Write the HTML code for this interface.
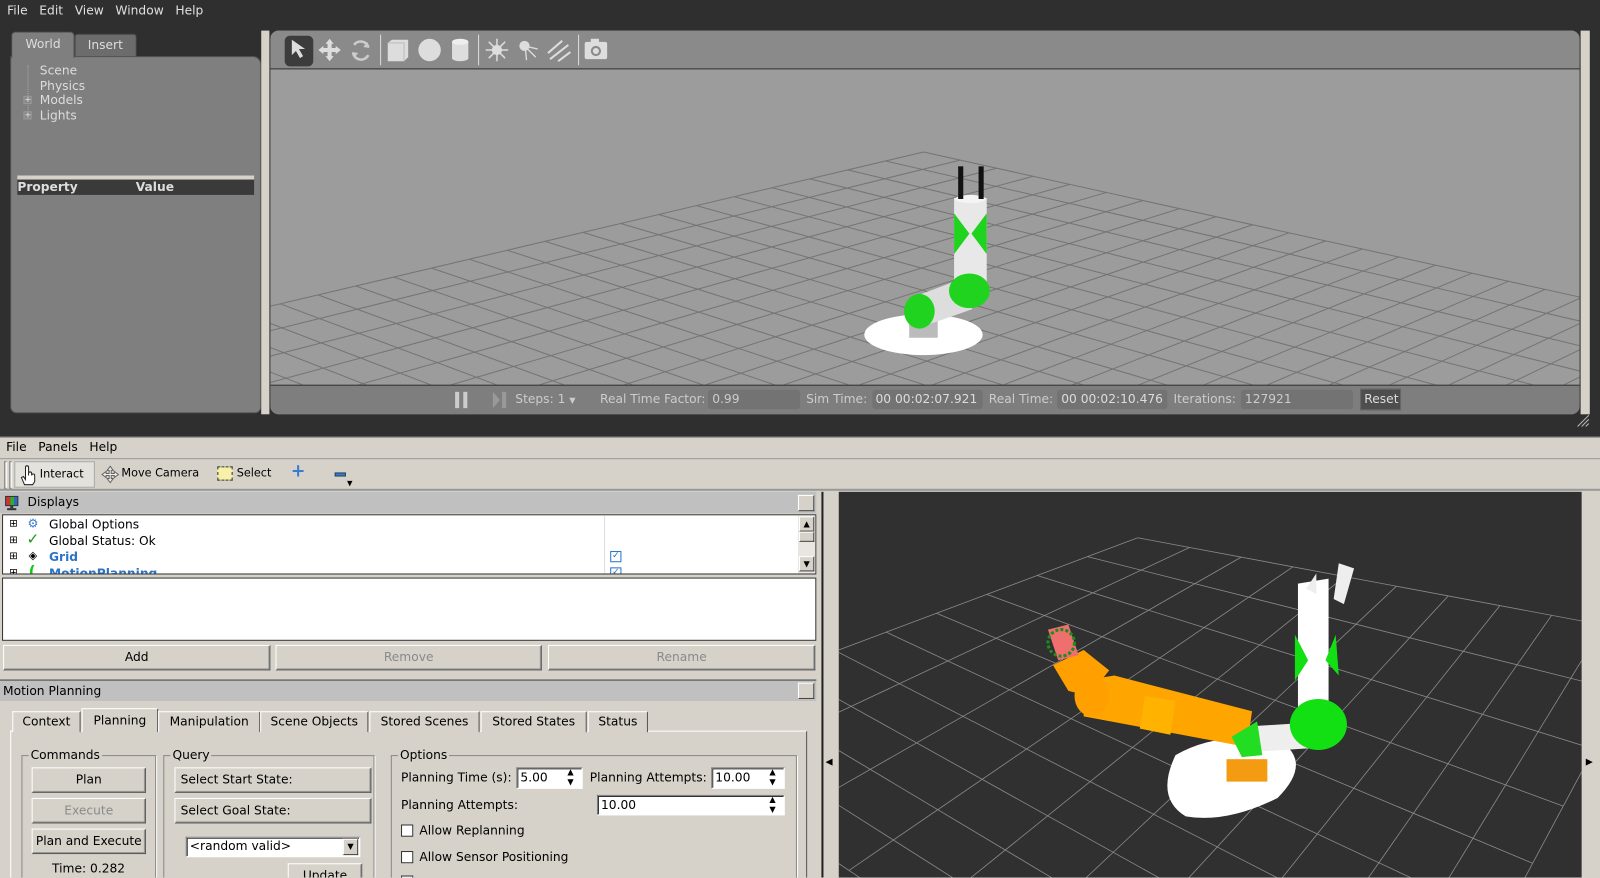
<!DOCTYPE html>
<html><head><meta charset="utf-8">
<style>
*{box-sizing:border-box;margin:0;padding:0}
html,body{width:1600px;height:878px;overflow:hidden;background:#d6d2ca;font-family:"DejaVu Sans","Liberation Sans",sans-serif;font-size:12px}
#root{position:absolute;left:0;top:0;width:1568px;height:860px;overflow:hidden;transform:scale(1.020408);transform-origin:0 0;background:#d6d2ca}
.a{position:absolute}
.t{position:absolute;white-space:nowrap;line-height:14px}
.btn{position:absolute;background:#d6d2ca;border:1px solid;border-color:#fff #555 #555 #fff;box-shadow:inset -1px -1px 0 #999;text-align:center;line-height:22px;color:#000}
.dis{color:#8a8a8a}
.sb{position:absolute;background:#fff;border:1px solid;border-color:#777 #fff #fff #777;box-shadow:inset 1px 1px 0 #333;padding-left:3px;line-height:18px}
.grp{position:absolute;border:1px solid #888;box-shadow:1px 1px 0 #fff}
.grp span{position:absolute;top:-8px;left:6px;background:#d6d2ca;padding:0 2px;line-height:14px}
.tab{position:absolute;top:697px;height:21px;border:1px solid;border-color:#fff #555 #d6d2ca #fff;line-height:19px;text-align:center;background:#d6d2ca}
.cb{position:absolute;width:12px;height:12px;background:#fff;border:1px solid #333}
</style></head><body><div id="root">

<div class="a" style="left:0;top:0;width:1568px;height:428px;background:#2f2f2f"></div>
<div class="t" style="left:7px;top:3px;color:#e0e0e0">File&nbsp;&nbsp;&nbsp;Edit&nbsp;&nbsp;&nbsp;View&nbsp;&nbsp;&nbsp;Window&nbsp;&nbsp;&nbsp;Help</div>

<div class="a" style="left:73px;top:33px;width:61px;height:23px;background:#6c6c6c;border:1px solid #444;border-radius:3px 3px 0 0"></div>
<div class="t" style="left:86px;top:37px;color:#ddd">Insert</div>
<div class="a" style="left:10px;top:55px;width:246px;height:350px;background:#7f7f7f;border:1px solid #555;border-radius:0 8px 6px 6px"></div>
<div class="a" style="left:11px;top:31px;width:62px;height:26px;background:#7f7f7f;border:1px solid #555;border-bottom:none;border-radius:4px 4px 0 0"></div>
<div class="t" style="left:25px;top:36px;color:#ddd">World</div>
<div class="a" style="left:27px;top:64px;width:1px;height:50px;border-left:1px dotted #aaa"></div>
<div class="t" style="left:39px;top:62px;color:#ddd">Scene</div>
<div class="t" style="left:39px;top:77px;color:#ddd">Physics</div>
<div class="t" style="left:39px;top:91px;color:#ddd">Models</div>
<div class="t" style="left:39px;top:106px;color:#ddd">Lights</div>
<div class="a" style="left:23px;top:94px;width:8px;height:8px;border:1px solid #999;background:#888;font-size:8px;line-height:6px;color:#eee;text-align:center">+</div>
<div class="a" style="left:23px;top:109px;width:8px;height:8px;border:1px solid #999;background:#888;font-size:8px;line-height:6px;color:#eee;text-align:center">+</div>
<div class="a" style="left:17px;top:172px;width:232px;height:4px;background:#d6d2ca"></div>
<div class="a" style="left:17px;top:176px;width:232px;height:15px;background:#3a3a3a"></div>
<div class="t" style="left:17px;top:176px;color:#ddd;font-weight:bold">Property</div>
<div class="t" style="left:133px;top:176px;color:#ddd;font-weight:bold">Value</div>

<div class="a" style="left:256px;top:30px;width:8px;height:376px;background:#d6d2ca"></div>
<div class="a" style="left:1549px;top:30px;width:9px;height:376px;background:#d6d2ca"></div>

<div class="a" style="left:265px;top:30px;width:1283px;height:376px;background:#9c9c9c;border-radius:8px;overflow:hidden">
 <div class="a" style="left:0;top:0;width:1283px;height:38px;background:#8a8a8a;border-bottom:1px solid #333"></div>
 <svg id="gz" class="a" style="left:0;top:39px" width="1283" height="308"></svg>
 <div class="a" style="left:0;top:347px;width:1283px;height:29px;background:#7e7e7e;border-top:1px solid #333"></div>
</div>
<div class="a" style="left:279px;top:35px;width:28px;height:30px;background:#3c3c3c;border-radius:5px"></div>
<svg class="a" style="left:279px;top:30px" width="330" height="38">
 <path d="M7 9 L7 24 L11 20 L15 27 L18 25 L14 18 L20 18 Z" fill="#ddd"/>
 <g fill="#ddd"><path d="M44 8 L48 13 L46 13 L46 17 L50 17 L50 15 L55 19 L50 23 L50 21 L46 21 L46 25 L48 25 L44 30 L40 25 L42 25 L42 21 L38 21 L38 23 L33 19 L38 15 L38 17 L42 17 L42 13 L40 13 Z"/></g>
 <path d="M68 14 A8 8 0 0 1 82 16 M82 24 A8 8 0 0 1 67 22" stroke="#ccc" stroke-width="2.5" fill="none"/>
 <path d="M81 11 L83 17 L77 16Z M68 27 L66 21 L72 22Z" fill="#ccc"/>
 <line x1="94" y1="4" x2="94" y2="34" stroke="#ddd"/>
 <path d="M101 12 L105 9 L121 9 L121 26 L117 30 L101 30 Z" fill="#ddd"/><path d="M101 12 L117 12 L117 30" stroke="#bbb" fill="none"/>
 <circle cx="142" cy="19" r="11" fill="#ddd"/>
 <path d="M164 11 L164 27 A8 3 0 0 0 180 27 L180 11 Z" fill="#ddd"/><ellipse cx="172" cy="11" rx="8" ry="3" fill="#eee"/>
 <line x1="190" y1="4" x2="190" y2="34" stroke="#ddd"/>
 <circle cx="208" cy="19" r="5" fill="#ddd"/><g stroke="#ddd" stroke-width="1.5"><line x1="208" y1="8" x2="208" y2="30"/><line x1="197" y1="19" x2="219" y2="19"/><line x1="200" y1="11" x2="216" y2="27"/><line x1="216" y1="11" x2="200" y2="27"/></g>
 <circle cx="235" cy="15" r="5" fill="#ddd"/><g stroke="#ddd" stroke-width="1.3"><line x1="238" y1="18" x2="246" y2="26"/><line x1="239" y1="16" x2="248" y2="18"/><line x1="236" y1="19" x2="237" y2="29"/></g>
 <g stroke="#ddd" stroke-width="2"><line x1="258" y1="22" x2="272" y2="10"/><line x1="260" y1="28" x2="278" y2="14"/><line x1="268" y1="30" x2="280" y2="21"/></g>
 <line x1="288" y1="4" x2="288" y2="34" stroke="#ddd"/>
 <rect x="294" y="11" width="22" height="17" rx="2" fill="#ddd"/><rect x="300" y="8" width="8" height="4" fill="#ddd"/><circle cx="305" cy="20" r="5" fill="#8a8a8a"/><circle cx="305" cy="20" r="3" fill="#ddd"/>
</svg>
<div class="a" style="left:446px;top:384px;width:4px;height:16px;background:#ccc"></div>
<div class="a" style="left:454px;top:384px;width:4px;height:16px;background:#ccc"></div>
<svg class="a" style="left:482px;top:383px" width="16" height="18"><path d="M1 1 L8 9 L1 17Z" fill="#999"/><rect x="10" y="1" width="4" height="16" fill="#999"/></svg>
<div class="t" style="left:505px;top:384px;color:#ccc">Steps: 1 <span style="font-size:8px">▼</span></div>
<div class="t" style="left:588px;top:384px;color:#ccc">Real Time Factor:</div>
<div class="a" style="left:694px;top:382px;width:90px;height:19px;background:#737373;border-radius:3px"></div>
<div class="t" style="left:698px;top:384px;color:#ccc">0.99</div>
<div class="t" style="left:790px;top:384px;color:#ccc">Sim Time:</div>
<div class="a" style="left:855px;top:382px;width:108px;height:19px;background:#737373;border-radius:3px"></div>
<div class="t" style="left:858px;top:384px;color:#ddd">00 00:02:07.921</div>
<div class="t" style="left:969px;top:384px;color:#ccc">Real Time:</div>
<div class="a" style="left:1036px;top:382px;width:108px;height:19px;background:#737373;border-radius:3px"></div>
<div class="t" style="left:1040px;top:384px;color:#ddd">00 00:02:10.476</div>
<div class="t" style="left:1150px;top:384px;color:#ccc">Iterations:</div>
<div class="a" style="left:1216px;top:382px;width:110px;height:19px;background:#737373;border-radius:3px"></div>
<div class="t" style="left:1220px;top:384px;color:#ccc">127921</div>
<div class="a" style="left:1333px;top:381px;width:40px;height:21px;background:#4e4e4e;border:1px solid #666"></div>
<div class="t" style="left:1337px;top:384px;color:#ddd">Reset</div>
<svg class="a" style="left:1544px;top:405px" width="14" height="14"><g stroke="#bbb"><line x1="2" y1="13" x2="13" y2="2"/><line x1="6" y1="13" x2="13" y2="6"/><line x1="10" y1="13" x2="13" y2="10"/></g></svg>

<div class="a" style="left:0;top:428px;width:1568px;height:1px;background:#888"></div>
<div class="t" style="left:6px;top:431px">File&nbsp;&nbsp;&nbsp;Panels&nbsp;&nbsp;&nbsp;Help</div>
<div class="a" style="left:0;top:449px;width:1568px;height:1px;background:#999"></div>
<div class="a" style="left:4px;top:452px;width:3px;height:27px;border:1px solid #888;border-right-color:#fff"></div>
<div class="a" style="left:9px;top:452px;width:3px;height:27px;border:1px solid #888;border-right-color:#fff"></div>
<div class="a" style="left:14px;top:452px;width:79px;height:26px;background:#e4e2dc;border:1px solid #aaa"></div>
<svg class="a" style="left:18px;top:455px" width="20" height="22"><path d="M6 20 L3 13 L5 12 L7 15 L7 3 A1.5 1.5 0 0 1 10 3 L10 11 L10 9 A1.5 1.5 0 0 1 13 9 L13 11 A1.5 1.5 0 0 1 16 11 L16 17 L14 20 Z" fill="#fff" stroke="#222"/></svg>
<div class="t" style="left:39px;top:458px;font-size:11px">Interact</div>
<svg class="a" style="left:99px;top:456px" width="18" height="18"><path d="M9 1 L12 5 L10 5 L10 8 L13 8 L13 6 L17 9 L13 12 L13 10 L10 10 L10 13 L12 13 L9 17 L6 13 L8 13 L8 10 L5 10 L5 12 L1 9 L5 6 L5 8 L8 8 L8 5 L6 5Z" fill="#eee" stroke="#666"/></svg>
<div class="t" style="left:119px;top:457px;font-size:11px">Move Camera</div>
<div class="a" style="left:213px;top:457px;width:15px;height:14px;background:#f7f0a8;border:1px dashed #333"></div>
<div class="t" style="left:232px;top:457px;font-size:11px">Select</div>
<div class="t" style="left:285px;top:455px;font-size:17px;color:#3a7ad0;font-weight:bold">+</div>
<div class="a" style="left:328px;top:463px;width:11px;height:4px;background:#3a7ad0;border:1px solid #245"></div>
<div class="t" style="left:340px;top:467px;font-size:7px">▼</div>
<div class="a" style="left:0;top:479px;width:1568px;height:2px;background:#999"></div>

<div class="a" style="left:0;top:482px;width:800px;height:21px;background:#c0c0c0"></div>
<svg class="a" style="left:4px;top:485px" width="16" height="16"><rect x="1" y="1" width="13" height="10" fill="#333"/><rect x="2" y="2" width="4" height="8" fill="#c33"/><rect x="6" y="2" width="4" height="8" fill="#3a3"/><rect x="10" y="2" width="3" height="8" fill="#36c"/><rect x="6" y="11" width="3" height="2" fill="#333"/><rect x="3" y="13" width="9" height="2" fill="#333"/></svg>
<div class="t" style="left:27px;top:485px">Displays</div>
<div class="a" style="left:782px;top:485px;width:16px;height:16px;border:1px solid;border-color:#fff #444 #444 #fff;background:#d6d2ca"></div>
<div class="a" style="left:2px;top:504px;width:798px;height:59px;background:#fff;border:1px solid #333;overflow:hidden">
 <div class="a" style="left:589px;top:0;width:1px;height:59px;background:#ddd"></div>
 <div class="a" style="left:779px;top:0;width:17px;height:59px;background:#e8e6e0"></div>
 <div class="a" style="left:780px;top:1px;width:15px;height:15px;background:#d6d2ca;border:1px solid;border-color:#fff #444 #444 #fff;font-size:8px;text-align:center;line-height:13px">▲</div>
 <div class="a" style="left:780px;top:16px;width:15px;height:10px;background:#d6d2ca;border:1px solid;border-color:#fff #444 #444 #fff"></div>
 <div class="a" style="left:780px;top:40px;width:15px;height:15px;background:#d6d2ca;border:1px solid;border-color:#fff #444 #444 #fff;font-size:8px;text-align:center;line-height:13px">▼</div>
 <div class="t" style="left:6px;top:2px;font-size:10px">⊞</div>
 <div class="t" style="left:6px;top:18px;font-size:10px">⊞</div>
 <div class="t" style="left:6px;top:34px;font-size:10px">⊞</div>
 <div class="t" style="left:6px;top:50px;font-size:10px">⊞</div>
 <div class="t" style="left:24px;top:1px;color:#3a7ad0">⚙</div>
 <div class="t" style="left:23px;top:16px;color:#1a9a1a;font-weight:bold;font-size:15px">✓</div>
 <div class="t" style="left:25px;top:33px;font-size:11px">◈</div>
 <div class="t" style="left:25px;top:48px;color:#1c1;font-weight:bold;font-size:15px">(</div>
 <div class="t" style="left:45px;top:2px">Global Options</div>
 <div class="t" style="left:45px;top:18px">Global Status: Ok</div>
 <div class="t" style="left:45px;top:34px;color:#2b74c8;font-weight:bold">Grid</div>
 <div class="t" style="left:45px;top:50px;color:#2b74c8;font-weight:bold">MotionPlanning</div>
 <div class="a" style="left:595px;top:35px;width:11px;height:11px;border:1px solid #2b74c8;color:#2b74c8;font-size:9px;line-height:9px;text-align:center">✓</div>
 <div class="a" style="left:595px;top:51px;width:11px;height:11px;border:1px solid #2b74c8;color:#2b74c8;font-size:9px;line-height:9px;text-align:center">✓</div>
</div>
<div class="a" style="left:2px;top:566px;width:798px;height:62px;background:#fff;border:1px solid #333"></div>
<div class="btn" style="left:3px;top:632px;width:262px;height:25px">Add</div>
<div class="btn dis" style="left:270px;top:632px;width:261px;height:25px">Remove</div>
<div class="btn dis" style="left:537px;top:632px;width:262px;height:25px">Rename</div>

<div class="a" style="left:0;top:666px;width:800px;height:1px;background:#333"></div>
<div class="a" style="left:0;top:667px;width:800px;height:20px;background:#c0c0c0"></div>
<div class="t" style="left:3px;top:670px">Motion Planning</div>
<div class="a" style="left:782px;top:669px;width:16px;height:16px;border:1px solid;border-color:#fff #444 #444 #fff;background:#d6d2ca"></div>
<div class="a" style="left:10px;top:716px;width:781px;height:150px;border:1px solid;border-color:#fff #555 #555 #fff"></div>
<div class="tab" style="left:12px;width:67px">Context</div>
<div class="tab" style="left:80px;top:694px;height:24px;width:75px;line-height:22px">Planning</div>
<div class="tab" style="left:155px;width:100px">Manipulation</div>
<div class="tab" style="left:255px;width:106px">Scene Objects</div>
<div class="tab" style="left:362px;width:108px">Stored Scenes</div>
<div class="tab" style="left:471px;width:104px">Stored States</div>
<div class="tab" style="left:576px;width:59px">Status</div>

<div class="grp" style="left:21px;top:740px;width:132px;height:130px"><span>Commands</span></div>
<div class="btn" style="left:31px;top:752px;width:112px;height:25px">Plan</div>
<div class="btn dis" style="left:31px;top:782px;width:112px;height:25px">Execute</div>
<div class="btn" style="left:31px;top:812px;width:112px;height:25px">Plan and Execute</div>
<div class="t" style="left:51px;top:844px">Time: 0.282</div>

<div class="grp" style="left:160px;top:740px;width:207px;height:130px"><span>Query</span></div>
<div class="btn" style="left:171px;top:752px;width:193px;height:25px;text-align:left;padding-left:5px">Select Start State:</div>
<div class="btn" style="left:171px;top:782px;width:193px;height:25px;text-align:left;padding-left:5px">Select Goal State:</div>
<div class="sb" style="left:182px;top:820px;width:171px;height:20px;line-height:17px">&lt;random valid&gt;</div>
<div class="a" style="left:336px;top:822px;width:15px;height:16px;background:#d6d2ca;border:1px solid;border-color:#fff #444 #444 #fff;font-size:8px;text-align:center;line-height:14px">▼</div>
<div class="btn" style="left:282px;top:846px;width:73px;height:25px">Update</div>

<div class="grp" style="left:383px;top:740px;width:398px;height:130px"><span>Options</span></div>
<div class="t" style="left:393px;top:755px">Planning Time (s):</div>
<div class="sb" style="left:506px;top:752px;width:65px;height:21px">5.00</div>
<div class="t" style="left:556px;top:752px;font-size:8px;line-height:10px">▲<br>▼</div>
<div class="t" style="left:578px;top:755px">Planning Attempts:</div>
<div class="sb" style="left:697px;top:752px;width:72px;height:21px">10.00</div>
<div class="t" style="left:754px;top:752px;font-size:8px;line-height:10px">▲<br>▼</div>
<div class="t" style="left:393px;top:782px">Planning Attempts:</div>
<div class="sb" style="left:585px;top:779px;width:184px;height:20px">10.00</div>
<div class="t" style="left:754px;top:779px;font-size:8px;line-height:10px">▲<br>▼</div>
<div class="cb" style="left:393px;top:808px"></div>
<div class="t" style="left:411px;top:807px">Allow Replanning</div>
<div class="cb" style="left:393px;top:834px"></div>
<div class="t" style="left:411px;top:833px">Allow Sensor Positioning</div>
<div class="cb" style="left:393px;top:858px"></div>

<div class="a" style="left:805px;top:482px;width:2px;height:380px;background:#222"></div>
<div class="t" style="left:809px;top:740px;font-size:9px">◀</div>
<div class="t" style="left:1554px;top:740px;font-size:9px">▶</div>

<svg id="rv" class="a" style="left:822px;top:482px;background:#303030" width="728" height="380"></svg>

</div>
<script>
function grid(T,L,R,B,n,col,w){
 var h='';
 function P(u,v){return [T[0]*(1-u)*(1-v)+R[0]*u*(1-v)+L[0]*(1-u)*v+B[0]*u*v, T[1]*(1-u)*(1-v)+R[1]*u*(1-v)+L[1]*(1-u)*v+B[1]*u*v];}
 for(var i=0;i<=n;i++){var a=P(i/n,0),b=P(i/n,1),c=P(0,i/n),d=P(1,i/n);
  h+='<line x1="'+a[0]+'" y1="'+a[1]+'" x2="'+b[0]+'" y2="'+b[1]+'"/>';
  h+='<line x1="'+c[0]+'" y1="'+c[1]+'" x2="'+d[0]+'" y2="'+d[1]+'"/>';}
 return '<g stroke="'+col+'" stroke-width="'+w+'">'+h+'</g>';
}
document.getElementById('gz').innerHTML=grid([640,80],[-250,290],[1500,270],[700,700],24,'#747474',1)+
'<ellipse cx="640" cy="259" rx="58" ry="20" fill="#fff"/>'+
'<rect x="626" y="240" width="28" height="22" fill="#bbb"/>'+
'<path d="M630 222 L678 204 L688 234 L642 250Z" fill="#ddd"/>'+
'<ellipse cx="636" cy="236" rx="15" ry="17" fill="#1fd31f"/>'+
'<rect x="670" y="125" width="32" height="100" fill="#e8e8e8"/>'+
'<ellipse cx="685" cy="216" rx="20" ry="17" fill="#1fd31f"/>'+
'<path d="M670 140 L685 160 L670 180Z M702 140 L687 160 L702 180Z" fill="#1fd31f"/>'+
'<ellipse cx="686" cy="126" rx="15" ry="4" fill="#f4f4f4"/>'+
'<rect x="674" y="94" width="5" height="32" fill="#111"/><rect x="694" y="94" width="5" height="32" fill="#111"/>';
document.getElementById('rv').innerHTML=grid([293,45],[-200,230],[800,140],[500,700],10,'#8a8a8a',0.8)+
'<path d="M330 258 Q310 300 340 318 Q380 325 430 300 Q460 270 440 250 Q380 230 330 258Z" fill="#fff"/>'+
'<rect x="380" y="262" width="40" height="22" fill="#f39c12"/>'+
'<path d="M400 230 L480 225 L480 250 L405 255Z" fill="#eee"/>'+
'<path d="M450 90 L480 85 L480 230 L450 240Z" fill="#fff"/>'+
'<path d="M458 95 L468 80 L468 100Z M490 70 L505 75 L495 110 L485 105Z" fill="#eee"/>'+
'<ellipse cx="470" cy="228" rx="28" ry="25" fill="#12e012"/>'+
'<path d="M447 140 L460 165 L447 185Z M487 140 L477 165 L490 180Z" fill="#12e012"/>'+
'<path d="M240 185 L270 180 L405 215 L400 250 L240 220 Z" fill="#ffa500"/>'+
'<path d="M300 200 L330 205 L325 238 L295 232Z" fill="#ffb300"/>'+
'<path d="M210 170 L240 155 L265 175 L245 200 L225 195Z" fill="#ffa000"/>'+
'<ellipse cx="248" cy="200" rx="17" ry="20" fill="#ffa000"/>'+
'<path d="M205 135 L225 130 L235 160 L215 165Z" fill="#ef6f6f"/>'+
'<circle cx="218" cy="148" r="13" fill="none" stroke="#1e8c1e" stroke-width="3" stroke-dasharray="3 2"/>'+
'<path d="M385 240 L410 225 L415 258 L395 260Z" fill="#22dd22"/>';
</script>
</body></html>
